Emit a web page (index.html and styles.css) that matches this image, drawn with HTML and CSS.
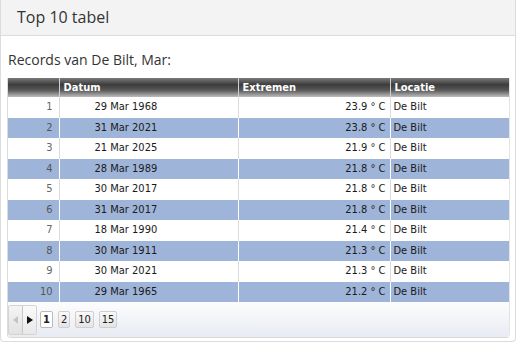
FILE: index.html
```html
<!DOCTYPE html>
<html>
<head>
<meta charset="utf-8">
<link rel="stylesheet" href="styles.css">
</head>
<body>
<div class="panel">
  <div class="panel-head"><span class="title">Top 10 tabel</span></div>
  <div class="panel-body">
    <p class="caption">Records van De Bilt, Mar:</p>
    <div class="grid">
      <table class="records">
        <colgroup>
          <col class="c-idx"><col class="c-date"><col class="c-val"><col class="c-loc">
        </colgroup>
        <thead>
          <tr><th></th><th>Datum</th><th>Extremen</th><th>Locatie</th></tr>
        </thead>
        <tbody>
          <tr><td class="idx">1</td><td class="date">29 Mar 1968</td><td class="val">23.9 ° C</td><td class="loc">De Bilt</td></tr>
          <tr class="alt"><td class="idx">2</td><td class="date">31 Mar 2021</td><td class="val">23.8 ° C</td><td class="loc">De Bilt</td></tr>
          <tr><td class="idx">3</td><td class="date">21 Mar 2025</td><td class="val">21.9 ° C</td><td class="loc">De Bilt</td></tr>
          <tr class="alt"><td class="idx">4</td><td class="date">28 Mar 1989</td><td class="val">21.8 ° C</td><td class="loc">De Bilt</td></tr>
          <tr><td class="idx">5</td><td class="date">30 Mar 2017</td><td class="val">21.8 ° C</td><td class="loc">De Bilt</td></tr>
          <tr class="alt"><td class="idx">6</td><td class="date">31 Mar 2017</td><td class="val">21.8 ° C</td><td class="loc">De Bilt</td></tr>
          <tr><td class="idx">7</td><td class="date">18 Mar 1990</td><td class="val">21.4 ° C</td><td class="loc">De Bilt</td></tr>
          <tr class="alt"><td class="idx">8</td><td class="date">30 Mar 1911</td><td class="val">21.3 ° C</td><td class="loc">De Bilt</td></tr>
          <tr><td class="idx">9</td><td class="date">30 Mar 2021</td><td class="val">21.3 ° C</td><td class="loc">De Bilt</td></tr>
          <tr class="alt"><td class="idx">10</td><td class="date">29 Mar 1965</td><td class="val">21.2 ° C</td><td class="loc">De Bilt</td></tr>
        </tbody>
      </table>
      <div class="pager">
        <div class="nav">
          <span class="nav-btn prev"><svg width="6" height="8" viewBox="0 0 6 8"><path d="M5 0L0 4L5 8Z" fill="#c4c4c4"/></svg></span>
          <span class="nav-btn next"><svg width="6" height="8" viewBox="0 0 6 8"><path d="M0 0L6 4L0 8Z" fill="#111"/></svg></span>
        </div>
        <span class="size active">1</span>
        <span class="size">2</span>
        <span class="size">10</span>
        <span class="size">15</span>
      </div>
    </div>
  </div>
</div>
</body>
</html>
```

FILE: styles.css
```css
html, body {
  margin: 0;
  padding: 0;
  background: #fff;
}
.panel {
  width: 514px;
  height: 341px;
  border: 1px solid #dcdcdc;
  border-top: none;
  border-radius: 0 0 4px 4px;
  font-family: "Open Sans", sans-serif;
  color: #333;
}
.panel-head {
  height: 35px;
  background: #f3f3f3;
  border-bottom: 1px solid #dcdcdc;
  display: flex;
  align-items: center;
  padding-left: 16px;
}
.title {
  font-size: 16px;
  color: #333;
  position: relative;
  top: -1px;
}
.panel-body {
  padding: 13px 6px 0 6px;
}
.caption {
  margin: 0 0 7px 1px;
  font-size: 14px;
  line-height: 22px;
  color: #333;
}
.grid {
  width: 501px;
  border-left: 1px solid #dcdcdc;
  border-bottom: 1px solid #d8d8d8;
  border-right: 1px solid #e4e4e4;
  border-radius: 0 0 4px 4px;
}
.records {
  border-collapse: collapse;
  table-layout: fixed;
  width: 501px;
  font-family: "DejaVu Sans Condensed", "DejaVu Sans", sans-serif;
  font-size: 11px;
  color: #1a1a1a;
}
.c-idx { width: 51px; }
.c-date { width: 179px; }
.c-val { width: 152px; }
.c-loc { width: 119px; }
.records th {
  height: 19px;
  padding: 0 4px;
  text-align: left;
  color: #fff;
  font-weight: bold;
  background: linear-gradient(#7a7a7a 0%, #3c3c3c 35%, #595959 65%, #bdbdbd 100%);
  border-left: 1px solid #d0d0d0;
  line-height: 19px;
}
.records th:first-child { border-left: none; }
.records td {
  height: 20.5px;
  padding: 0;
  line-height: 20px;
  border-left: 1px solid #dcdcdc;
  white-space: nowrap;
}
.records td:first-child { border-left: none; }
.records tr.alt td {
  background: #9fb4d9;
  border-left-color: #fff;
}
.records td.idx {
  text-align: right;
  padding-right: 6px;
  color: #666;
}
.records tr.alt td.idx { color: #555; }
.records td.date { text-align: left; padding-left: 35px; }
.records td.val { text-align: right; padding-right: 4px; }
.records td.loc { padding-left: 3px; }
.pager {
  height: 35px;
  background: linear-gradient(#fdfdfd, #e8ebf3);
  display: flex;
  align-items: center;
  border-radius: 0 0 4px 4px;
}
.nav {
  display: flex;
  height: 30px;
  width: 29px;
  border: 1px solid #d4d4d4;
  border-radius: 2px;
  background: linear-gradient(#f4f4f4, #e2e2e2);
  box-sizing: border-box;
}
.nav-btn {
  display: flex;
  align-items: center;
  justify-content: center;
  height: 100%;
  box-sizing: border-box;
}
.prev { width: 14px; }
.next {
  width: 14px;
  border-left: 1px solid #c8c8c8;
  background: linear-gradient(#fafafa, #e8e8e8);
}
.size {
  display: inline-flex;
  align-items: center;
  justify-content: center;
  height: 17px;
  min-width: 12px;
  padding: 0 2px;
  border: 1px solid #cfcfcf;
  border-radius: 2px;
  background: linear-gradient(#fafafa, #e4e4e4);
  font-family: "DejaVu Sans Condensed", "DejaVu Sans", sans-serif;
  font-size: 11px;
  color: #222;
  box-sizing: border-box;
  margin-left: 5px;
}
.nav + .size { margin-left: 3px; }
.size.active {
  background: #fff;
  font-weight: bold;
  border-color: #bbb;
}
```
